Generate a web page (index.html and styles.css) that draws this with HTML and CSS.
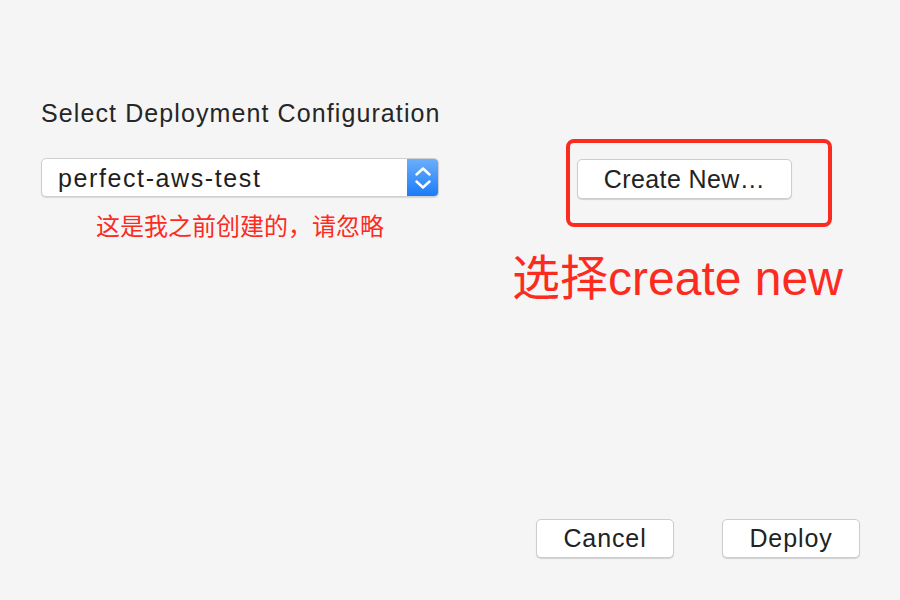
FILE: index.html
```html
<!DOCTYPE html>
<html lang="zh-CN">
<head>
<meta charset="utf-8">
<link rel="stylesheet" href="styles.css">
</head>
<body>
<div class="dialog">
  <div class="top">
    <div class="left">
      <div class="label">Select Deployment Configuration</div>
      <div class="select">
        <span class="select-text">perfect-aws-test</span>
        <span class="stepper">
          <svg width="16" height="22" viewBox="0 0 16 22">
            <path d="M1.5 7.5 L8 1.5 L14.5 7.5" fill="none" stroke="#fff" stroke-width="2.4" stroke-linecap="round" stroke-linejoin="round"/>
            <path d="M1.5 14.5 L8 20.5 L14.5 14.5" fill="none" stroke="#fff" stroke-width="2.4" stroke-linecap="round" stroke-linejoin="round"/>
          </svg>
        </span>
      </div>
      <div class="note">这是我之前创建的，请忽略</div>
    </div>
    <div class="right">
      <div class="highlight">
        <button class="btn btn-create">Create New…</button>
      </div>
      <div class="hint">选择create new</div>
    </div>
  </div>
  <div class="footer">
    <button class="btn btn-footer">Cancel</button>
    <button class="btn btn-footer">Deploy</button>
  </div>
</div>
</body>
</html>
```

FILE: styles.css
```css
html, body {
  margin: 0;
  padding: 0;
  background: #f5f5f5;
}
body {
  font-family: "Liberation Sans", Arial, "Noto Sans CJK SC", sans-serif;
  color: #222;
}
.dialog {
  width: 900px;
  height: 600px;
  display: flex;
  flex-direction: column;
  box-sizing: border-box;
}
.top {
  display: flex;
  padding: 99px 0 0 41px;
}
.left {
  width: 398px;
  display: flex;
  flex-direction: column;
}
.label {
  font-size: 25px;
  line-height: 28px;
  letter-spacing: 1.1px;
  color: #262626;
  white-space: nowrap;
}
.select {
  margin-top: 31px;
  height: 39px;
  box-sizing: border-box;
  background: #fff;
  border: 1px solid #cfcfcf;
  border-radius: 5px;
  box-shadow: 0 1px 1px rgba(0,0,0,0.12);
  display: flex;
  align-items: center;
  overflow: hidden;
}
.select-text {
  flex: 1;
  padding-left: 16px;
  font-size: 25px;
  line-height: 28px;
  letter-spacing: 1.6px;
  color: #1e1e1e;
}
.stepper {
  width: 32px;
  align-self: stretch;
  margin: -1px -1px -1px 0;
  background: linear-gradient(#6db0fc, #1a7af8);
  border-radius: 0 5px 5px 0;
  display: flex;
  align-items: center;
  justify-content: center;
}
.note {
  margin-top: 14px;
  font-family: "Noto Sans CJK SC", sans-serif;
  font-size: 24px;
  line-height: 28px;
  color: #fc2b1f;
  text-align: center;
}
.right {
  margin-left: 73px;
  display: flex;
  flex-direction: column;
  align-items: flex-start;
}
.highlight {
  margin-top: 40px;
  margin-left: 54px;
  width: 266px;
  height: 88px;
  box-sizing: border-box;
  border: 4px solid #fc2b1f;
  border-radius: 8px;
  padding: 16px 0 0 7px;
}
.btn {
  font-family: "Liberation Sans", Arial, sans-serif;
  font-size: 25px;
  letter-spacing: 0.9px;
  color: #222;
  background: #fff;
  border: 1px solid #cdcdcd;
  border-radius: 5px;
  box-shadow: 0 1px 1px rgba(0,0,0,0.15);
  padding: 0;
  margin: 0;
  box-sizing: border-box;
}
.btn-create {
  width: 215px;
  height: 40px;
  letter-spacing: 0.4px;
}
.hint {
  margin-top: 24px;
  font-size: 48px;
  line-height: 56px;
  color: #fc2b1f;
  white-space: nowrap;
}
.footer {
  margin-top: auto;
  display: flex;
  justify-content: flex-end;
  gap: 48px;
  padding: 0 40px 42px 0;
}
.btn-footer {
  width: 138px;
  height: 39px;
}
```
